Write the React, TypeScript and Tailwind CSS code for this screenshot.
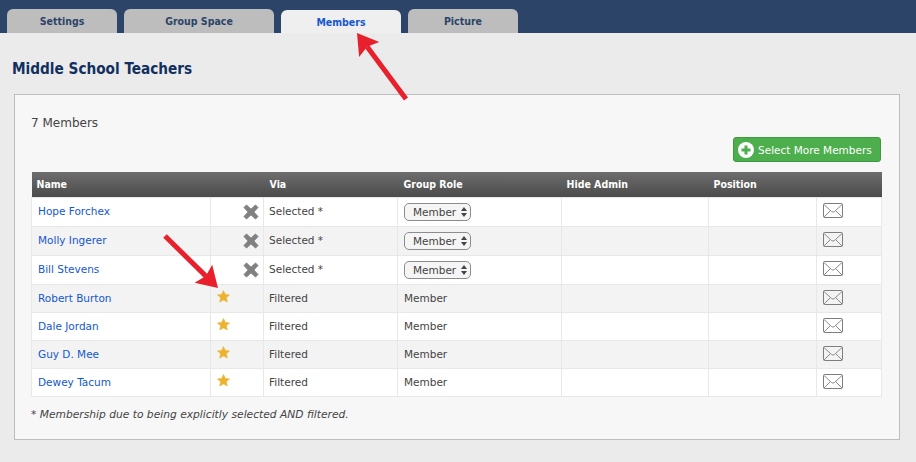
import React from 'react';

const font = { fontFamily: '"DejaVu Sans", Verdana, sans-serif' };
const boldFont = { fontFamily: '"DejaVu Sans Condensed", "Open Sans", sans-serif' };

const members = [
  { name: 'Hope Forchex', via: 'Selected *', removable: true },
  { name: 'Molly Ingerer', via: 'Selected *', removable: true },
  { name: 'Bill Stevens', via: 'Selected *', removable: true },
  { name: 'Robert Burton', via: 'Filtered', removable: false },
  { name: 'Dale Jordan', via: 'Filtered', removable: false },
  { name: 'Guy D. Mee', via: 'Filtered', removable: false },
  { name: 'Dewey Tacum', via: 'Filtered', removable: false },
];

const tabs = [
  { label: 'Settings', width: 'w-[110px]' },
  { label: 'Group Space', width: 'w-[150px]' },
  { label: 'Members', width: 'w-[120px]', active: true },
  { label: 'Picture', width: 'w-[110px]' },
];

const RemoveIcon = () => (
  <svg width="16" height="16" viewBox="0 0 16 16" className="block">
    <path d="M3.5 1 8 5.2 12.500 1 15 3.500 10.800 8 15 12.500 12.500 15 8 10.800 3.500 15 1 12.500 5.200 8 1 3.500Z" fill="#808080" stroke="#808080" strokeLinejoin="round" />
  </svg>
);

const StarIcon = () => (
  <svg width="13" height="13" viewBox="0 0 13 13" className="block">
    <path d="M6.500 .6 8.300 4.400 12.500 4.900 9.400 7.700 10.300 12 6.500 9.900 2.700 12 3.600 7.700 .5 4.900 4.700 4.400Z" fill="#ecb330" stroke="#ecb330" strokeWidth=".6" strokeLinejoin="round" />
  </svg>
);

const MailIcon = () => (
  <svg width="20" height="15" viewBox="0 0 20 15" className="block">
    <rect x=".5" y=".5" width="19" height="14" rx="1" fill="none" stroke="#7d7d7d" />
    <path d="M1 1.500 8.500 8.500Q10 9.800 11.500 8.500L19 1.500M1 14 7.500 7.500M19 14 12.500 7.500" fill="none" stroke="#8a8a8a" />
  </svg>
);

const RoleSelect = () => (
  <div className="flex h-[18px] w-[67px] items-center justify-between rounded-[5px] border border-[#8c8c8c] bg-[#f5f5f5] pl-[8px] pr-[3px] text-[10.500px] text-[#444]">
    <span className="pt-[2px]">Member</span>
    <svg width="6" height="12" viewBox="0 0 6 12" className="block">
      <path d="M3 1 6 5H0ZM3 11 0 7H6Z" fill="#444" />
    </svg>
  </div>
);

const Arrow = ({ x1, y1, x2, y2 }: { x1: number; y1: number; x2: number; y2: number }) => {
  const angle = Math.atan2(y2 - y1, x2 - x1);
  const len = 24;
  const spread = 0.55;
  const base = 17;
  const p = (a: number, l: number) => `${x2 - Math.cos(a) * l},${y2 - Math.sin(a) * l}`;
  return (
    <>
      <line x1={x1} y1={y1} x2={x2 - Math.cos(angle) * base} y2={y2 - Math.sin(angle) * base} stroke="#e8202c" strokeWidth="5" />
      <polygon points={`${x2},${y2} ${p(angle + spread, len)} ${p(angle, base)} ${p(angle - spread, len)}`} fill="#e8202c" />
    </>
  );
};

export default function App() {
  return (
    <div className="relative h-[462px] w-[916px] overflow-hidden bg-[#ebebeb]" style={font}>
      <div className="flex h-[33px] items-end gap-[7px] bg-[#2c4468] pl-[7px]">
        {tabs.map((t) => (
          <div
            key={t.label}
            style={boldFont}
            className={`flex ${t.width} items-center justify-center rounded-t-[6px] pt-[2px] text-[10.500px] font-bold ${
              t.active ? 'h-[23px] bg-[#efefef] text-[#1557cf]' : 'h-[24px] bg-[#bdbdbd] text-[#2c4468]'
            }`}
          >
            {t.label}
          </div>
        ))}
      </div>

      <h1 style={boldFont} className="mt-[26px] ml-[12px] text-[15.200px] leading-[20px] font-bold text-[#12305f]">Middle School Teachers</h1>

      <div className="mt-[15px] ml-[14px] h-[346px] w-[886px] border border-[#bdbdbd] bg-[#f7f7f7] pt-[20px] pr-[18px] pl-[16px]">
        <div className="text-[12px] leading-[16px] text-[#444]">7 Members</div>
        <div className="mt-[6px] flex justify-end">
          <div className="flex h-[25px] w-[148px] items-center gap-[4px] rounded-[3px] border border-[#3f9a3f] bg-[#4cae4c] pl-[4px] text-[10.500px] text-white">
            <svg width="16" height="16" viewBox="0 0 16 16" className="block">
              <circle cx="8" cy="8" r="8" fill="#fff" />
              <path d="M6.500 3.500h3v3h3v3h-3v3h-3v-3h-3v-3h3Z" fill="#4cae4c" />
            </svg>
            <span className="pt-[2px]">Select More Members</span>
          </div>
        </div>

        <table className="mt-[10px] w-[850px] table-fixed border-collapse text-[10.500px]">
          <colgroup>
            <col className="w-[179px]" />
            <col className="w-[53px]" />
            <col className="w-[134px]" />
            <col className="w-[164px]" />
            <col className="w-[147px]" />
            <col className="w-[108px]" />
            <col className="w-[65px]" />
          </colgroup>
          <thead>
            <tr style={boldFont} className="h-[25px] bg-gradient-to-b from-[#6e6e6e] to-[#4b4b4b] text-left font-bold text-white">
              <th className="pt-[2px] pl-[5px]">Name</th>
              <th />
              <th className="pt-[2px] pl-[6px]">Via</th>
              <th className="pt-[2px] pl-[6px]">Group Role</th>
              <th className="pt-[2px] pl-[5px]">Hide Admin</th>
              <th className="pt-[2px] pl-[5px]">Position</th>
              <th />
            </tr>
          </thead>
          <tbody>
            {members.map((m, i) => (
              <tr key={m.name} className={`${m.removable ? 'h-[29px]' : 'h-[28px]'} ${i % 2 ? 'bg-[#f3f3f3]' : 'bg-white'} text-[#444]`}>
                <td className={`border border-[#e8e8e8] pl-[6px] text-[#1557cf] ${m.removable ? '' : 'pt-[2px]'}`}>{m.name}</td>
                <td className="border border-[#e8e8e8]">
                  {m.removable ? (
                    <div className="flex justify-end pr-[4px]">
                      <RemoveIcon />
                    </div>
                  ) : (
                    <div className="mb-[4px] pl-[6px]">
                      <StarIcon />
                    </div>
                  )}
                </td>
                <td className={`border border-[#e8e8e8] pl-[5px] ${m.removable ? '' : 'pt-[2px]'}`}>{m.via}</td>
                <td className={`border border-[#e8e8e8] pl-[6px] ${m.removable ? '' : 'pt-[2px]'}`}>{m.removable ? <RoleSelect /> : 'Member'}</td>
                <td className="border border-[#e8e8e8]" />
                <td className="border border-[#e8e8e8]" />
                <td className="border border-[#e8e8e8] pl-[6px]">
                  <div className="mb-[2px]">
                    <MailIcon />
                  </div>
                </td>
              </tr>
            ))}
          </tbody>
        </table>

        <p className="mt-[10px] text-[10.700px] leading-[16px] text-[#444] italic">* Membership due to being explicitly selected AND filtered.</p>
      </div>

      <svg width="916" height="462" className="pointer-events-none absolute top-0 left-0">
        <Arrow x1={406} y1={99} x2={357} y2={33} />
        <Arrow x1={165} y1={236} x2={218} y2={288} />
      </svg>
    </div>
  );
}
